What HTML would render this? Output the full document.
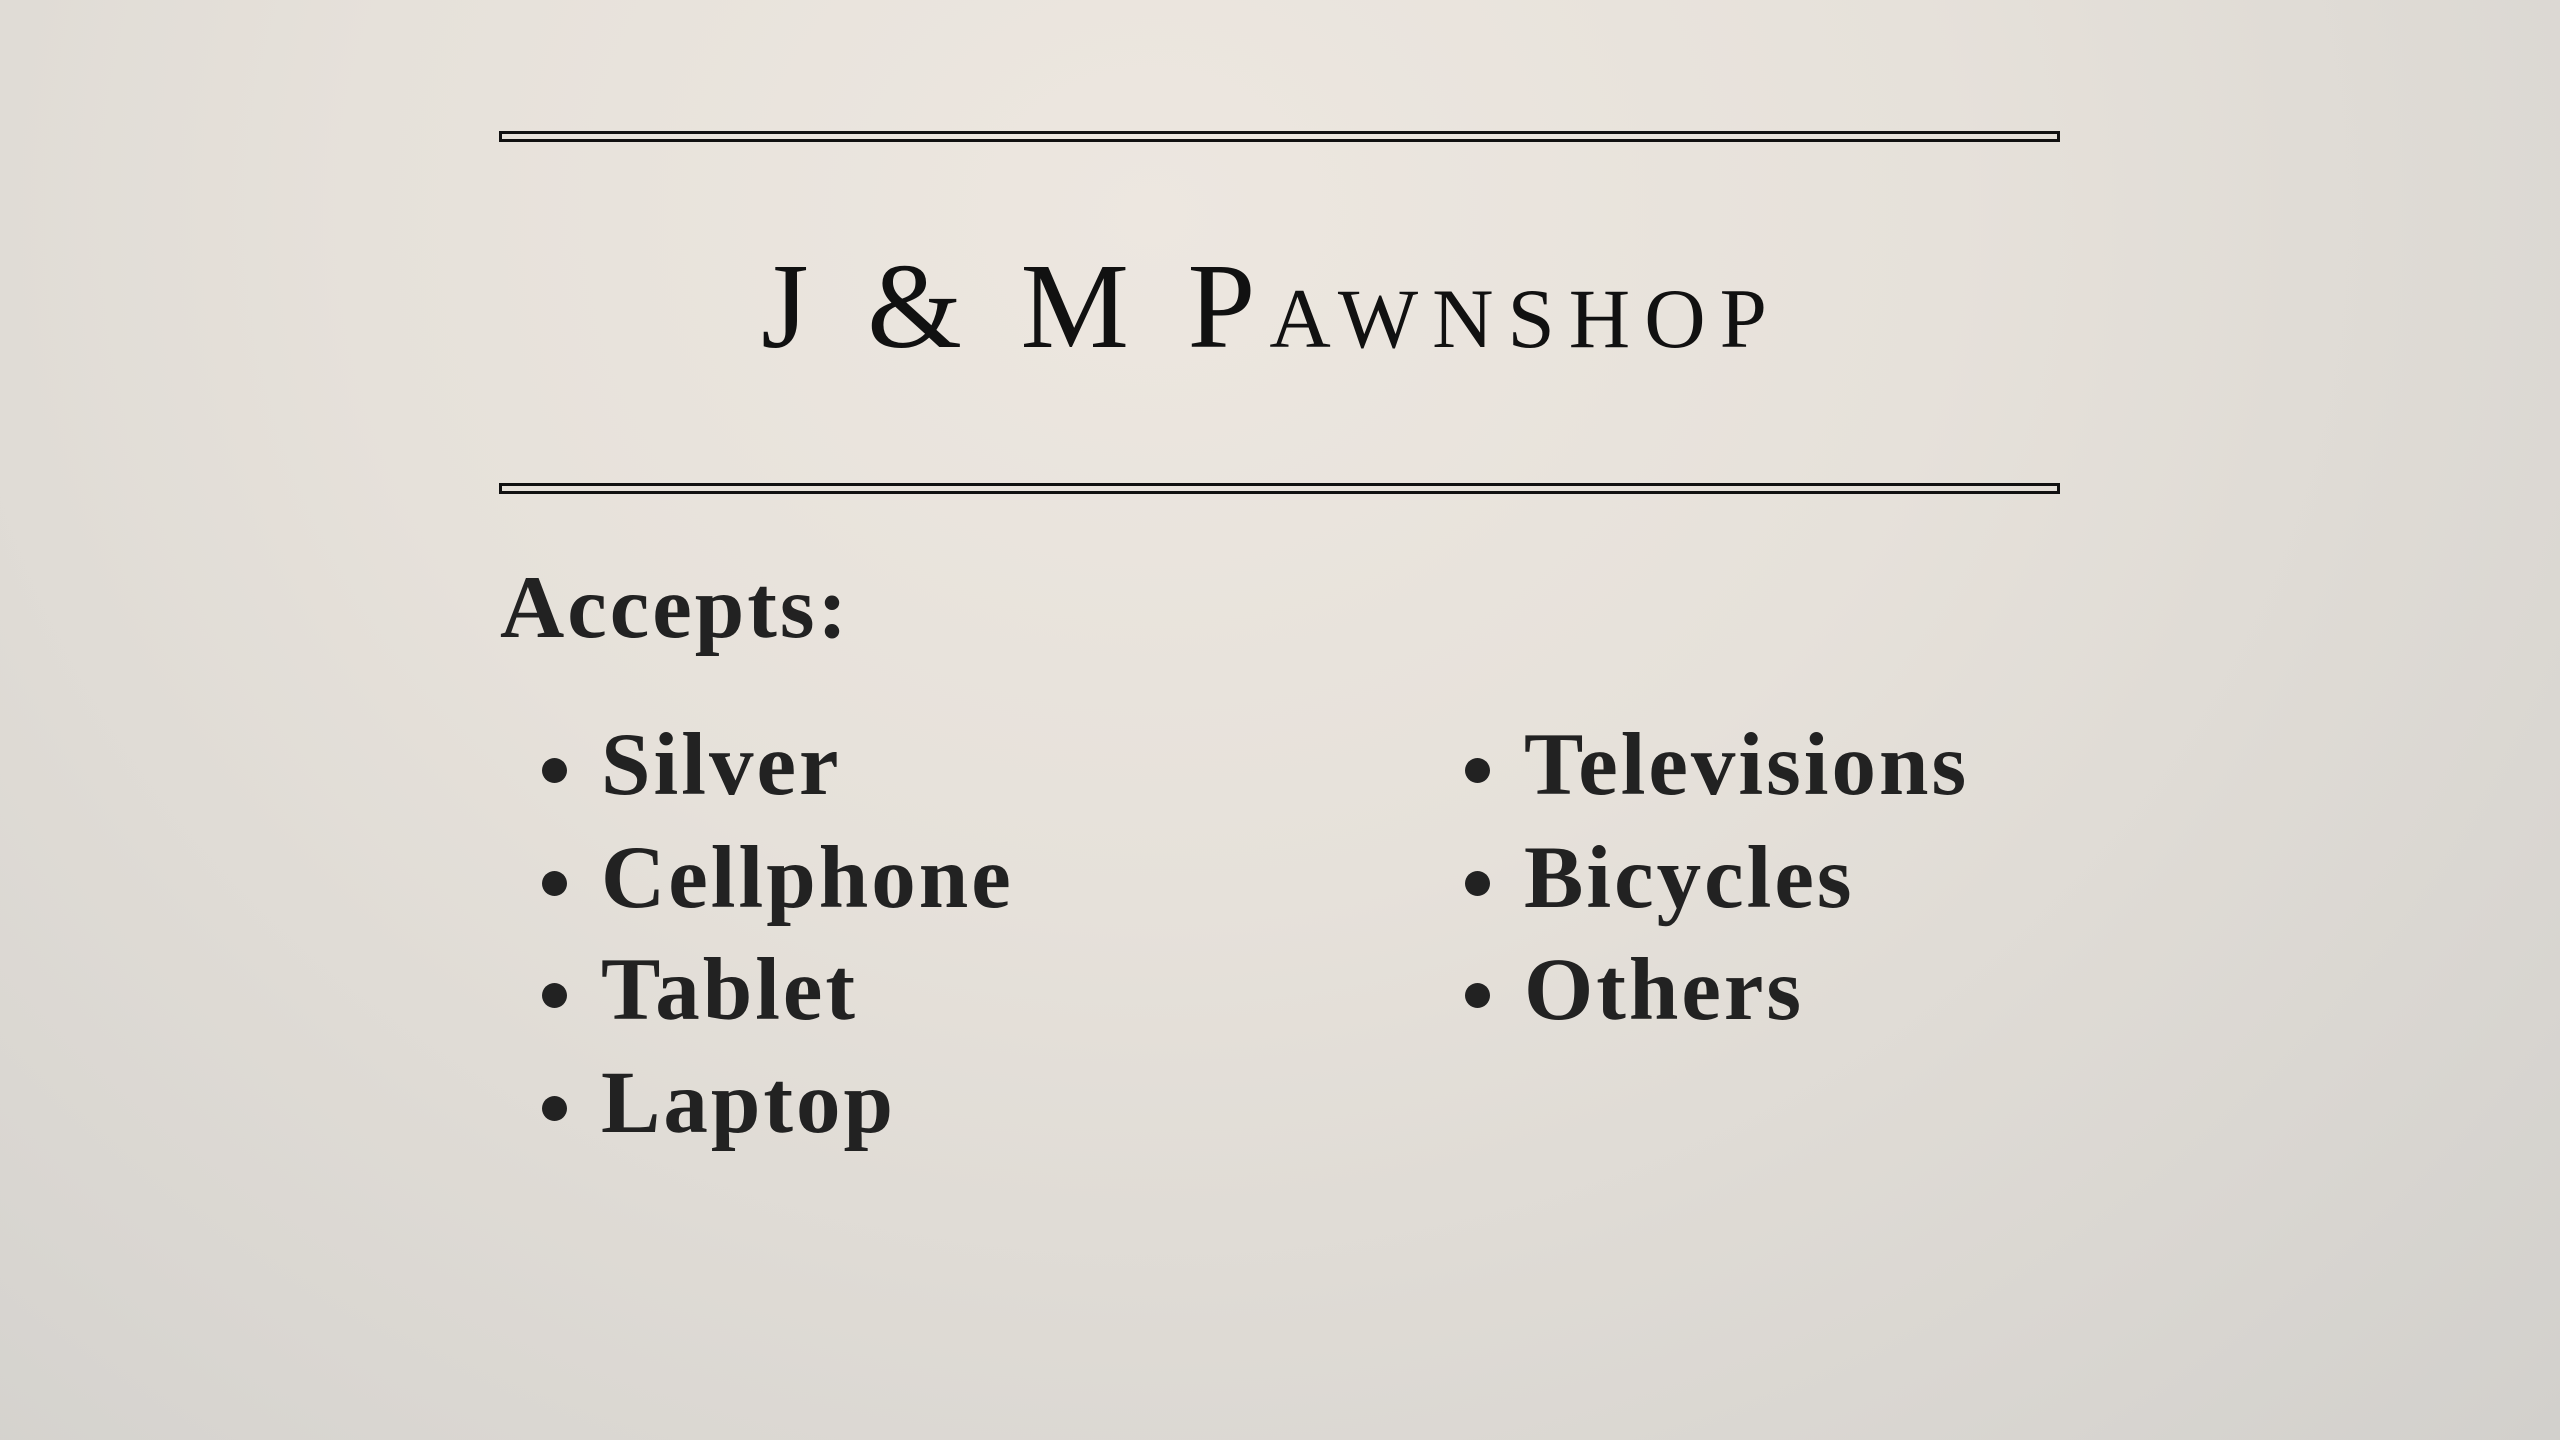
<!DOCTYPE html>
<html><head><meta charset="utf-8"><style>
html,body{margin:0;padding:0}
body{width:2560px;height:1440px;position:relative;overflow:hidden;
background:radial-gradient(ellipse at 45% 15%,#ede7e0 0%,#e6e1da 40%,#d9d6d1 80%,#d2d0cc 100%);
font-family:"Liberation Serif",serif;color:#222}
.rule{position:absolute;left:499px;width:1555px;height:5px;border:3px solid #111;box-sizing:content-box}
.t{position:absolute;left:500px;width:1562px;text-align:center;top:246px;font-size:122px;line-height:122px;font-variant:small-caps;color:#111;letter-spacing:14px;text-indent:-20px;white-space:nowrap}
.acc{position:absolute;left:500px;top:564px;font-size:89px;line-height:89px;font-weight:bold;letter-spacing:3px}
.li{position:absolute;font-size:89px;line-height:89px;font-weight:bold;letter-spacing:3px}
.b{position:absolute;width:25px;height:25px;border-radius:50%;background:#222}
</style></head><body>
<div class="rule" style="top:131px"></div>
<div class="t">J &amp; M Pawnshop</div>
<div class="rule" style="top:483px"></div>
<div class="acc">Accepts:</div>

<div class="b" style="left:542px;top:758px"></div><div class="li" style="left:601px;top:721px">Silver</div>
<div class="b" style="left:542px;top:871px"></div><div class="li" style="left:601px;top:834px">Cellphone</div>
<div class="b" style="left:542px;top:983px"></div><div class="li" style="left:601px;top:946px">Tablet</div>
<div class="b" style="left:542px;top:1096px"></div><div class="li" style="left:601px;top:1059px">Laptop</div>

<div class="b" style="left:1465px;top:758px"></div><div class="li" style="left:1524px;top:721px">Televisions</div>
<div class="b" style="left:1465px;top:871px"></div><div class="li" style="left:1524px;top:834px">Bicycles</div>
<div class="b" style="left:1465px;top:983px"></div><div class="li" style="left:1524px;top:946px">Others</div>
</body></html>
